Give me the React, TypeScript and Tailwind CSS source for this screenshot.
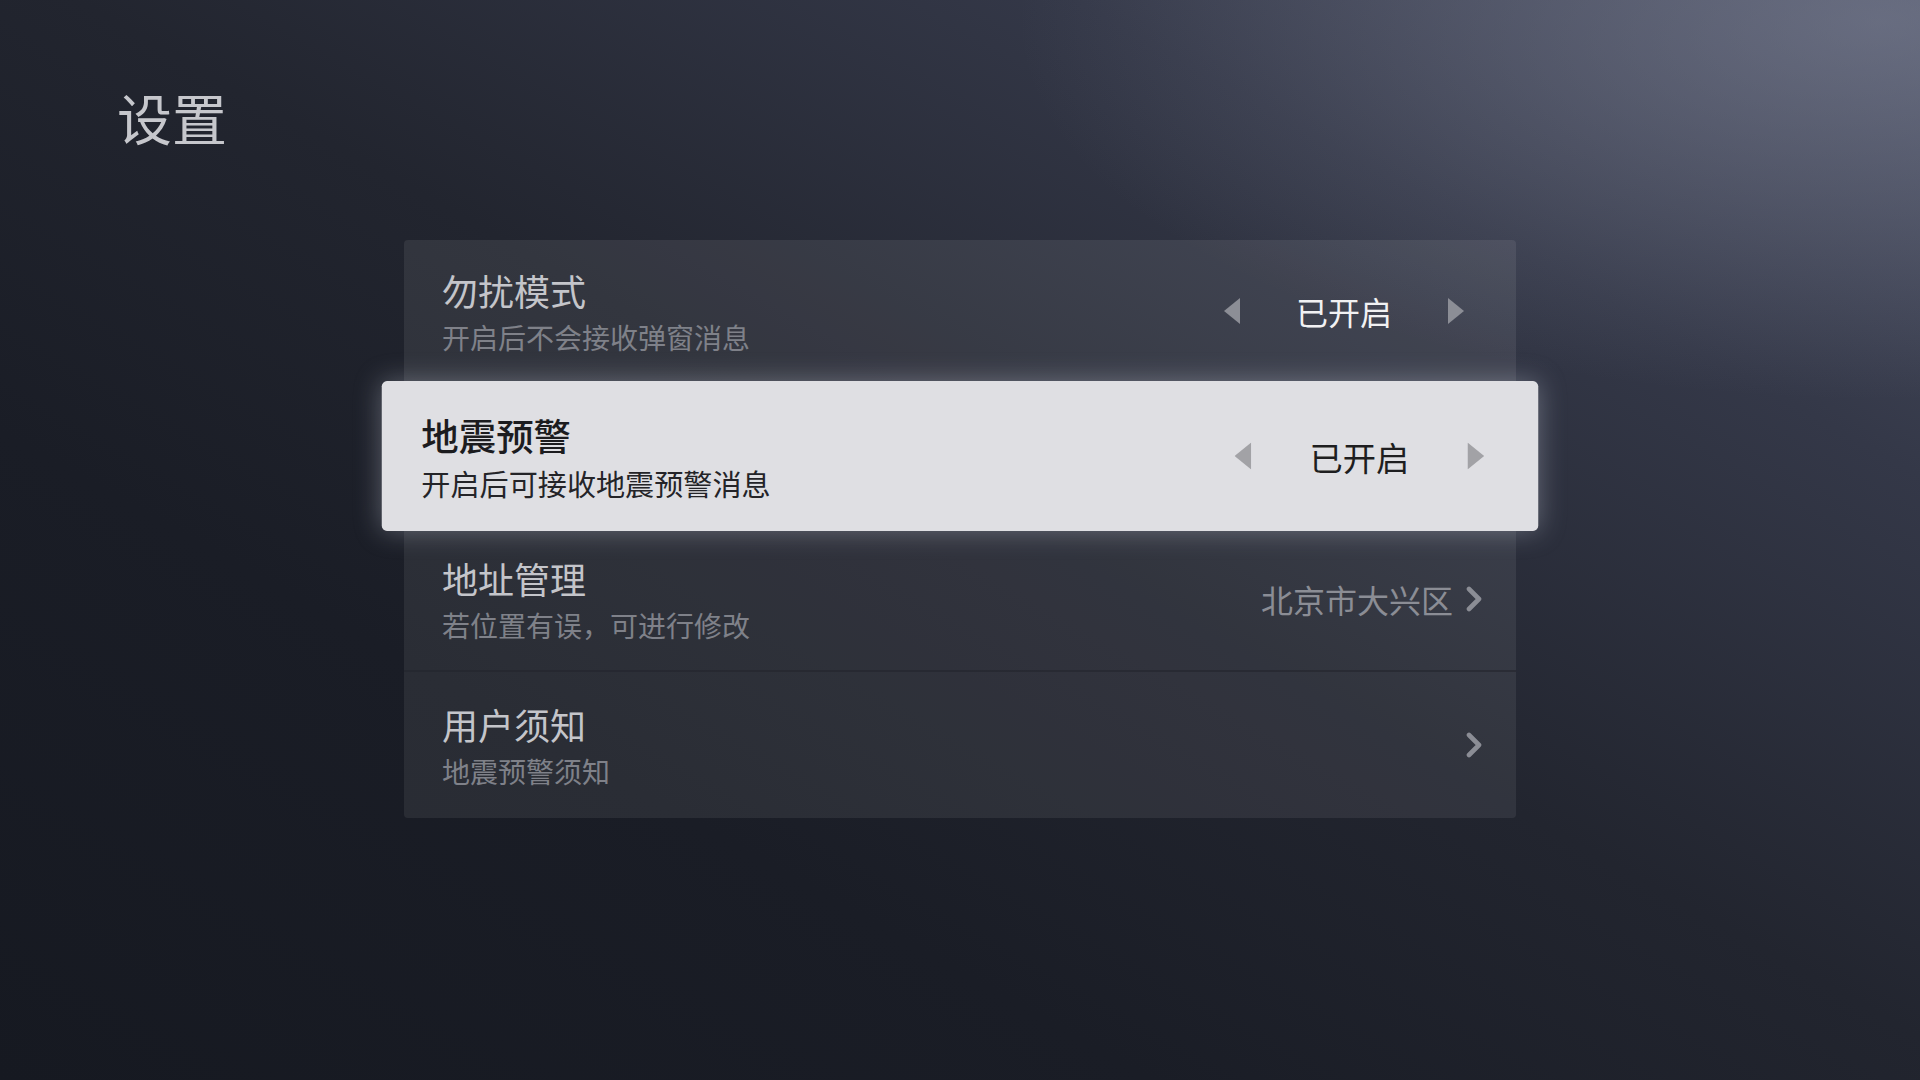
import React from 'react'

const FONT = { fontFamily: '"Noto Sans CJK SC", "Noto Sans", sans-serif' }

function TriLeft({ className }: { className: string }) {
  return (
    <svg width="16" height="26" viewBox="0 0 16 26" className={className}>
      <polygon points="16,0 16,26 0,13" fill="currentColor" />
    </svg>
  )
}

function TriRight({ className }: { className: string }) {
  return (
    <svg width="16" height="26" viewBox="0 0 16 26" className={className}>
      <polygon points="0,0 0,26 16,13" fill="currentColor" />
    </svg>
  )
}

function Chevron() {
  return (
    <svg width="20" height="26" viewBox="0 0 20 26" className="text-[#8b8d95]">
      <polyline
        points="5,3 15,13 5,23"
        fill="none"
        stroke="currentColor"
        strokeWidth="4.6"
        strokeLinecap="round"
        strokeLinejoin="round"
      />
    </svg>
  )
}

type Row = {
  title: string
  sub: string
  kind: 'toggle' | 'link'
  value?: string
  focused?: boolean
}

const rows: Row[] = [
  { title: '勿扰模式', sub: '开启后不会接收弹窗消息', kind: 'toggle', value: '已开启' },
  { title: '地震预警', sub: '开启后可接收地震预警消息', kind: 'toggle', value: '已开启', focused: true },
  { title: '地址管理', sub: '若位置有误，可进行修改', kind: 'link', value: '北京市大兴区' },
  { title: '用户须知', sub: '地震预警须知', kind: 'link' },
]

function SettingRow({ row, last }: { row: Row; last: boolean }) {
  const f = row.focused
  return (
    <div
      className={
        f
          ? 'relative z-10 flex h-[144px] scale-[1.04] items-center rounded-[5px] bg-[#dfdfe3] pl-[38px] shadow-[0_0_26px_rgba(210,214,228,0.35)]'
          : last
            ? 'flex h-[146px] items-center pl-[38px]'
            : 'flex h-[144px] items-center border-b-2 border-[#23252d]/60 pl-[38px]'
      }
    >
      <div className="flex flex-1 flex-col gap-[7px]">
        <span
          className={
            f
              ? 'text-[36px] leading-[44px] font-medium text-[#1c1c1f]'
              : 'text-[36px] leading-[44px] text-[#c4c5ca]'
          }
        >
          {row.title}
        </span>
        <span
          className={
            f ? 'text-[28px] leading-[36px] text-[#242428]' : 'text-[28px] leading-[36px] text-[#7f8189]'
          }
        >
          {row.sub}
        </span>
      </div>

      {row.kind === 'toggle' ? (
        <div className="mr-[52px] flex w-[240px] items-center justify-between">
          <TriLeft className={f ? 'text-[#a2a2a6]' : 'text-[#8c8e96]'} />
          <span className={f ? 'text-[32px] text-[#1e1e20]' : 'text-[32px] text-[#f1f1f3]'}>{row.value}</span>
          <TriRight className={f ? 'text-[#a2a2a6]' : 'text-[#8c8e96]'} />
        </div>
      ) : (
        <div className="mr-[32px] flex items-center gap-[11px]">
          {row.value && <span className="text-[32px] text-[#8b8d95]">{row.value}</span>}
          <Chevron />
        </div>
      )}
    </div>
  )
}

export default function App() {
  return (
    <div
      style={FONT}
      className="relative h-[1080px] w-[1920px] overflow-hidden bg-[radial-gradient(ellipse_45%_35%_at_98%_2%,rgba(140,145,165,0.45),transparent),linear-gradient(to_bottom_left,#4c5164_0%,#343848_22%,#22252f_48%,#1a1d26_70%,#161921_100%)]"
    >
      <h1 className="pl-[117px] pt-[89px] text-[55px] leading-none font-normal text-[#c6c7cc]">设置</h1>

      <div className="mx-auto mt-[96px] w-[1112px] overflow-visible">
        <div className="flex flex-col">
          {rows.map((r, i) => (
            <div
              key={r.title}
              className={
                r.focused
                  ? ''
                  : i === 0
                    ? 'rounded-t-[4px] bg-white/[0.08]'
                    : i === rows.length - 1
                      ? 'rounded-b-[4px] bg-white/[0.07]'
                      : 'bg-white/[0.07]'
              }
            >
              <SettingRow row={r} last={i === rows.length - 1} />
            </div>
          ))}
        </div>
      </div>
    </div>
  )
}
